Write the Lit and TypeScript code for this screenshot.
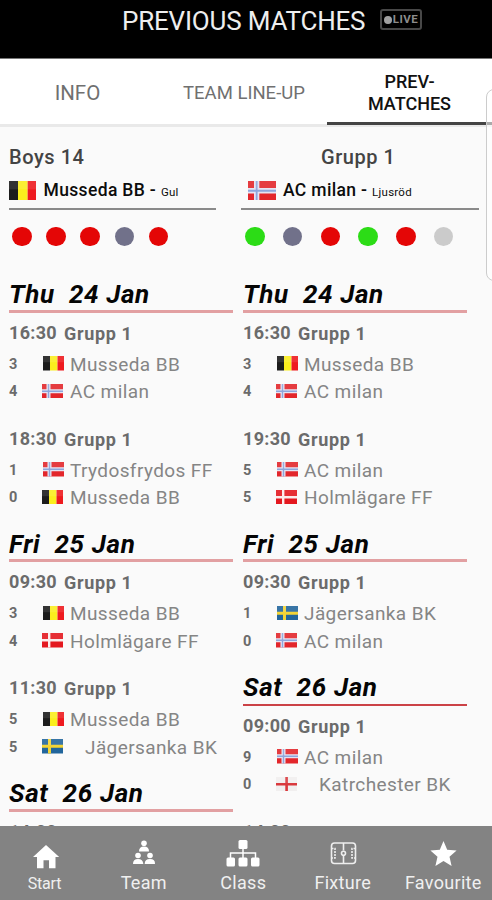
import { LitElement, html, css, svg } from "lit";
import { customElement, property } from "lit/decorators.js";

type Country = "be" | "no" | "dk" | "se" | "en";
interface Side { score: number; flag: Country; name: string; shift?: boolean }
interface Match { time: string; sides: Side[] }
interface Day { label: string; strong?: boolean; matches: Match[] }

const s = (score: number, flag: Country, name: string, shift = false): Side => ({ score, flag, name, shift });

const LEFT: Day[] = [
  { label: "Thu  24 Jan", matches: [
    { time: "16:30", sides: [s(3, "be", "Musseda BB"), s(4, "no", "AC milan")] },
    { time: "18:30", sides: [s(1, "no", "Trydosfrydos FF"), s(0, "be", "Musseda BB")] } ] },
  { label: "Fri  25 Jan", matches: [
    { time: "09:30", sides: [s(3, "be", "Musseda BB"), s(4, "dk", "Holmlägare FF")] },
    { time: "11:30", sides: [s(5, "be", "Musseda BB"), s(5, "se", "Jägersanka BK", true)] } ] },
  { label: "Sat  26 Jan", matches: [{ time: "14:00", sides: [] }] },
];

const RIGHT: Day[] = [
  { label: "Thu  24 Jan", matches: [
    { time: "16:30", sides: [s(3, "be", "Musseda BB"), s(4, "no", "AC milan")] },
    { time: "19:30", sides: [s(5, "no", "AC milan"), s(5, "dk", "Holmlägare FF")] } ] },
  { label: "Fri  25 Jan", matches: [
    { time: "09:30", sides: [s(1, "se", "Jägersanka BK"), s(0, "no", "AC milan")] } ] },
  { label: "Sat  26 Jan", strong: true, matches: [
    { time: "09:00", sides: [s(9, "no", "AC milan"), s(0, "en", "Katrchester BK", true)] },
    { time: "14:00", sides: [] } ] },
];

@customElement("country-flag")
class CountryFlag extends LitElement {
  @property() code: Country = "be";
  static styles = css`
    :host { display: block; flex: none; }
    svg { display: block; width: 100%; height: 100%; }
  `;
  render() {
    const art = {
      be: svg`<path fill="#1c1c1c" d="M0 0h7v14H0z"/><path fill="#fbee1d" d="M7 0h7.5v14H7z"/><path fill="#ee1a1f" d="M14.500 0H21v14h-6.500z"/>`,
      no: svg`<path fill="#e3262b" d="M0 0h21v14H0z"/><path fill="#e6e3f2" d="M4.500 0h4v14h-4zM0 5h21v4H0z"/><path fill="#8ea6dc" d="M5.800 0h1.400v14H5.800zM0 6.300h21v1.400H0z"/>`,
      dk: svg`<path fill="#e4181f" d="M0 0h21v14H0z"/><path fill="#fbecec" d="M6 0h2.400v14H6zM0 5.900h21v2.200H0z"/>`,
      se: svg`<path fill="#22669c" d="M0 0h21v14H0z"/><path fill="#f3d435" d="M6 0h3v14H6zM0 5.500h21v3H0z"/>`,
      en: svg`<path fill="#f1efef" d="M0 0h21v14H0z"/><path fill="#d9383c" d="M9.300 0h2.600v14H9.300zM0 5.900h21v2.300H0z"/>`,
    }[this.code];
    return html`<svg viewBox="0 0 21 14" preserveAspectRatio="none">${art}<path fill="#fff" fill-opacity=".1" d="M0 0h21v6H0z"/></svg>`;
  }
}

@customElement("match-list")
class MatchList extends LitElement {
  @property({ attribute: false }) days: Day[] = [];
  static styles = css`
    :host { display: block; width: 224px; }
    .day { height: 37.5px; box-sizing: border-box; border-bottom: 3px solid #e2a0a2; font: italic 700 26px/38px Roboto, sans-serif; letter-spacing: .65px; color: #050505; white-space: pre; }
    .day.strong { border-bottom: 2px solid #cb4247; }
    .match { height: 106px; color: #6b6b6b; }
    .head { display: flex; gap: 8px; height: 38px; font: 700 18px/42px Roboto, sans-serif; }
    .time { width: 47px; letter-spacing: .3px; line-height: 39.500px; }
    .group { letter-spacing: .65px; }
    .side { display: flex; height: 27.700px; align-items: flex-start; }
    .score { width: 34px; font: 700 14.500px/27px Roboto, sans-serif; }
    .side country-flag { width: 21px; height: 14.500px; margin-top: 5.500px; }
    .side:nth-child(3) .score { width: 33px; }
    .side:nth-child(3) country-flag { margin-right: 1px; }
    .name { margin-left: 6px; font: 400 19px/28px Roboto, sans-serif; color: #858585; white-space: nowrap; letter-spacing: .4px; }
    .name.shift { margin-left: 21px; }
  `;
  render() {
    return this.days.map(d => html`
      <div class="day ${d.strong ? "strong" : ""}">${d.label}</div>
      ${d.matches.map(m => html`<div class="match">
        <div class="head"><span class="time">${m.time}</span><span class="group">Grupp 1</span></div>
        ${m.sides.map(t => html`<div class="side"><span class="score">${t.score}</span><country-flag code=${t.flag}></country-flag><span class="name ${t.shift ? "shift" : ""}">${t.name}</span></div>`)}
      </div>`)}`);
  }
}

const ICONS = {
  start: svg`<path d="M15 5 28.200 17h-3.700v11.300H18v-8h-5.500v8H6V17H2z"/>`,
  team: svg`<circle cx="14" cy="3.300" r="2.800"/><path d="M9 11.500q0-5 5-5t5 5z"/><circle cx="8" cy="15.500" r="2.800"/><path d="M3 24q0-5 5-5t5.300 5z"/><circle cx="20" cy="15.500" r="2.800"/><path d="M14.700 24q0-5 5.300-5t5 5z"/>`,
  klass: svg`<rect x="9.500" y="0" width="9" height="9" rx="1.500"/><path fill="none" stroke="#fff" stroke-width="1.500" d="M14 9v9M1.500 18v-5h25v5"/><rect x="-2.500" y="17.500" width="8.500" height="9" rx="1.500"/><rect x="9.500" y="17.500" width="9" height="9" rx="1.500"/><rect x="22" y="17.500" width="8.500" height="9" rx="1.500"/>`,
  fixture: svg`<g fill="none" stroke="#eee" stroke-width="1.600"><rect x="2.500" y="3" width="24" height="20.500" rx="3"/><path d="M14.500 3v7.500M14.500 16v7.500"/><path stroke-dasharray="2 1" d="M2.500 8.500h3.500v9.500H2.500M26.500 8.500h-3.500v9.500h3.500"/><circle cx="14.500" cy="13.200" r="2"/></g>`,
  star: svg`<path d="m14.500 1 3.700 8.700 9.400.8-7.100 6.200 2.100 9.200-8.100-4.900-8.100 4.900 2.100-9.200-7.100-6.200 9.400-.8z"/>`,
};

@customElement("app-root")
class AppRoot extends LitElement {
  static styles = css`
    :host { display: flex; flex-direction: column; position: relative; width: 492px; height: 900px; overflow: hidden; background: #fafafa; font-family: Roboto, sans-serif; }
    .title { flex: none; display: flex; box-sizing: border-box; height: 59px; background: #000; border-bottom: 1px solid #777; color: #eee; padding-left: 122px; }
    .title h1 { margin: 0; width: 258px; font: 400 26px/43px Roboto, sans-serif; letter-spacing: -.2px; white-space: nowrap; }
    .live { display: flex; align-items: center; justify-content: center; gap: 1px; box-sizing: border-box; width: 42px; height: 21px; margin-top: 9px; border: 2px solid #484848; border-radius: 3px; color: #8c8c8c; font: 700 11.500px/17px Roboto, sans-serif; letter-spacing: .5px; }
    .live i { width: 8px; height: 8px; border-radius: 50%; background: #a0a0a0; }
    .tabs { flex: none; display: flex; box-sizing: border-box; height: 68px; background: #fff; border-bottom: 3px solid #e9e9e9; color: #707070; text-align: center; }
    .tab { white-space: pre; box-sizing: border-box; }
    .info { width: 155px; font-size: 20.500px; line-height: 68px; }
    .lineup { width: 172px; padding-left: 6px; font-size: 18.500px; line-height: 68px; }
    .prev { width: 165px; height: 66px; border-bottom: 3px solid #444; color: #111; font: 500 18px/21.500px Roboto, sans-serif; padding-top: 12px; }
    .teams { flex: none; display: flex; height: 148px; padding: 17px 0 0 9px; box-sizing: border-box; }
    .team { width: 207px; margin-right: 25px; }
    .team + .team { width: 238px; margin: 0; }
    .cat { font: 500 20px/26px Roboto, sans-serif; color: #444; letter-spacing: .55px; }
    .team + .team .cat { padding-left: 80px; }
    .club { display: flex; align-items: flex-start; height: 38px; border-bottom: 2px solid #8a8a8a; color: #0c0c0c; white-space: pre; font: 500 17.500px/40px Roboto, sans-serif; letter-spacing: .35px; }
    .club country-flag { width: 27px; height: 19.500px; margin: 10.500px 7.500px 0 0; }
    .team + .team .club country-flag { margin-left: 7px; width: 28px; margin-right: 7px; }
    .club small { font: 400 11.500px/44px Roboto, sans-serif; letter-spacing: .25px; }
    .form { display: flex; gap: 14.600px; padding: 16.600px 0 0 3.300px; }
    .team + .team .form { gap: 18.300px; padding-left: 4px; }
    .form i { width: 19.500px; height: 19.500px; border-radius: 50%; background: #e40606; }
    .form .g { background: #2cdc16; } .form .d { background: #71718a; } .form .n { background: #cbcbcb; }
    .lists { flex: 1; min-height: 0; overflow: hidden; display: flex; gap: 10px; padding-left: 9px; }
    .nav { flex: none; display: grid; grid-template-columns: 90px repeat(4, 99.500px); padding-left: 4px; height: 74px; box-sizing: border-box; background: #838383; color: #f0f0f0; }
    .nav div { min-width: 0; margin-right: -5px; display: flex; flex-direction: column; align-items: center; font: 400 18px/20px Roboto, sans-serif; letter-spacing: .3px; margin-left: -5px; }
    .nav div:first-child { font-size: 16px; line-height: 22px; letter-spacing: -.2px; margin-left: -14px; }
    .nav div:last-child { margin-right: -7px; }
    .nav svg { width: 28px; height: 28px; margin: 14px 0 5px; fill: #fff; overflow: visible; }
    .drawer { position: absolute; left: 486px; top: 89px; width: 30px; height: 192px; box-sizing: border-box; border: 1px solid #ccc; border-radius: 8px; background: rgba(255,255,255,.55); }
  `;
  render() {
    const dots = (k: string) => html`<div class="form">${[...k].map(c => html`<i class=${c}></i>`)}</div>`;
    return html`
      <header class="title"><h1>PREVIOUS MATCHES</h1><span class="live"><i></i>LIVE</span></header>
      <nav class="tabs"><span class="tab info">INFO</span><span class="tab lineup">TEAM LINE-UP</span><span class="tab prev">PREV-
MATCHES</span></nav>
      <section class="teams">
        <div class="team"><div class="cat">Boys 14</div><div class="club"><country-flag code="be"></country-flag><span>Musseda BB - </span><small>Gul</small></div>${dots("rrrdr")}</div>
        <div class="team"><div class="cat">Grupp 1</div><div class="club"><country-flag code="no"></country-flag><span>AC milan - </span><small>Ljusröd</small></div>${dots("gdrgrn")}</div>
      </section>
      <main class="lists"><match-list .days=${LEFT}></match-list><match-list .days=${RIGHT}></match-list></main>
      <footer class="nav">${([["start", "Start"], ["team", "Team"], ["klass", "Class"], ["fixture", "Fixture"], ["star", "Favourite"]] as const).map(([k, l]) => html`<div><svg viewBox="0 0 28 28">${ICONS[k]}</svg>${l}</div>`)}</footer>
      <div class="drawer"></div>`;
  }
}
